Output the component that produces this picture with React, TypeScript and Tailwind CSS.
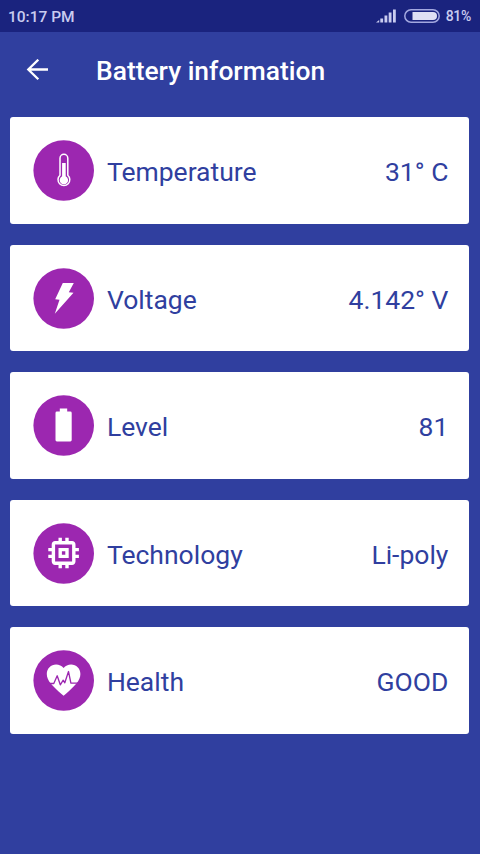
import React from 'react';

interface InfoCardProps {
  label: string;
  value: string;
  icon: React.ReactNode;
}

const ThermometerIcon: React.FC = () => (
  <>
    <path d="M27 35.200V18.200a3.900 3.900 0 0 1 7.800 0v17a5.900 5.900 0 1 1-7.800 0z" fill="none" stroke="white" strokeWidth="1.500"/>
    <path d="M29.100 23h3.600v13.300a4.200 4.200 0 1 1-3.600 0z" fill="white"/>
  </>
);

const BoltIcon: React.FC = () => (
  <path d="M29.800 15H40.800L35.800 24.300L40.500 24.800L21.800 45.700L26.500 31.700L22.200 31.300z" fill="white"/>
);

const BatteryIcon: React.FC = () => (
  <path d="M26.800 13.500h7.400v3h3.100a1.400 1.400 0 0 1 1.400 1.400v27.200a1.400 1.400 0 0 1-1.400 1.400H23.900a1.400 1.400 0 0 1-1.400-1.400V17.900a1.400 1.400 0 0 1 1.400-1.400h2.900z" fill="white"/>
);

const ChipIcon: React.FC = () => (
  <path transform="translate(10.2 9.6) scale(1.7)" d="M15 9H9v6h6V9zm-2 4h-2v-2h2v2zm8-2V9h-2V7c0-1.100-.9-2-2-2h-2V3h-2v2h-2V3H9v2H7c-1.100 0-2 .9-2 2v2H3v2h2v2H3v2h2v2c0 1.100.9 2 2 2h2v2h2v-2h2v2h2v-2h2c1.100 0 2-.9 2-2v-2h2v-2h-2v-2h2zm-4 6H7V7h10v10z" fill="white"/>
);

const HeartIcon: React.FC = () => (
  <>
    <path d="M30.600 45.800L28.200 43.700C19.500 35.900 13.800 30.800 13.800 24C13.800 18.500 18 14.500 23.100 14.500C26 14.500 28.800 15.900 30.600 18.100C32.400 15.900 35.200 14.500 38.100 14.500C43.200 14.500 47.400 18.500 47.400 24C47.400 30.800 41.700 35.900 33 43.700z" fill="white"/>
    <path d="M15 33.500H20.800L24.200 25.800L27.300 34.800L30.200 30.200L31.800 32.800L35.500 21.500L37.900 33.200H46.500" fill="none" stroke="#9C27B0" strokeWidth="1.300" strokeLinejoin="round"/>
  </>
);

const InfoCard: React.FC<InfoCardProps> = ({ label, value, icon }) => (
  <div className="flex h-[106.500px] items-center rounded-[3px] bg-white pl-[23px] pr-[21px] text-[26.500px] text-[#303F9F]">
    <svg viewBox="0 0 61 61" className="h-[61px] w-[61px] shrink-0">
      <circle cx="30.7" cy="30.5" r="30.3" fill="#9C27B0"/>
      {icon}
    </svg>
    <span className="ml-[12.500px] mt-[3px] leading-8">{label}</span>
    <span className="ml-auto mt-[3px] leading-8">{value}</span>
  </div>
);

const StatusBar: React.FC = () => (
  <div className="flex h-8 items-center bg-[#1A237E] pl-2 pr-[9px] text-[#C9CCF0]">
    <span className="mt-[3px] text-[15.500px] font-medium">10:17 PM</span>
    <svg viewBox="0 0 20 14" className="ml-auto h-[14px] w-5" fill="#C9CCF0">
      <path d="M0 13.500L3.200 11V13.500z"/>
      <rect x="4.300" y="9.500" width="2.800" height="4"/>
      <rect x="8.500" y="6.500" width="2.800" height="7"/>
      <rect x="12.700" y="3.500" width="2.800" height="10"/>
      <rect x="17" y="0.500" width="2.800" height="13"/>
    </svg>
    <svg viewBox="0 0 36 14" className="ml-2 h-[14px] w-9">
      <rect x="0.800" y="0.800" width="34.400" height="12.400" rx="6.200" fill="none" stroke="#A3A8E0" strokeWidth="1.500"/>
      <path d="M8.500 3H29a4 4 0 0 1 0 8H8.500z" fill="#DFE0F4"/>
    </svg>
    <span className="ml-[6px] mt-px text-[14px] font-medium tracking-[-0.300px]">81%</span>
  </div>
);

const items: InfoCardProps[] = [
  { label: 'Temperature', value: '31° C', icon: <ThermometerIcon/> },
  { label: 'Voltage', value: '4.142° V', icon: <BoltIcon/> },
  { label: 'Level', value: '81', icon: <BatteryIcon/> },
  { label: 'Technology', value: 'Li-poly', icon: <ChipIcon/> },
  { label: 'Health', value: 'GOOD', icon: <HeartIcon/> },
];

export default function App() {
  return (
    <div className="flex h-[854px] w-[480px] flex-col overflow-hidden bg-[#303F9F] font-['Roboto',sans-serif]">
      <StatusBar/>
      <header className="flex h-[85.400px] items-start pl-[26px] text-white">
        <svg viewBox="0 0 23 22" className="mt-[27px] h-[22px] w-[23px]" fill="none" stroke="white" strokeWidth="2.300">
          <path d="M22 10.500H2M12.300 0.700L2.300 10.500L12.300 20.300"/>
        </svg>
        <h1 className="ml-[47px] mt-[23px] text-[26.400px] font-medium leading-8">Battery information</h1>
      </header>
      <main className="flex flex-col gap-[21px] pl-[10.400px] pr-[10.600px]">
        {items.map(item => (
          <InfoCard key={item.label} {...item}/>
        ))}
      </main>
    </div>
  );
}
